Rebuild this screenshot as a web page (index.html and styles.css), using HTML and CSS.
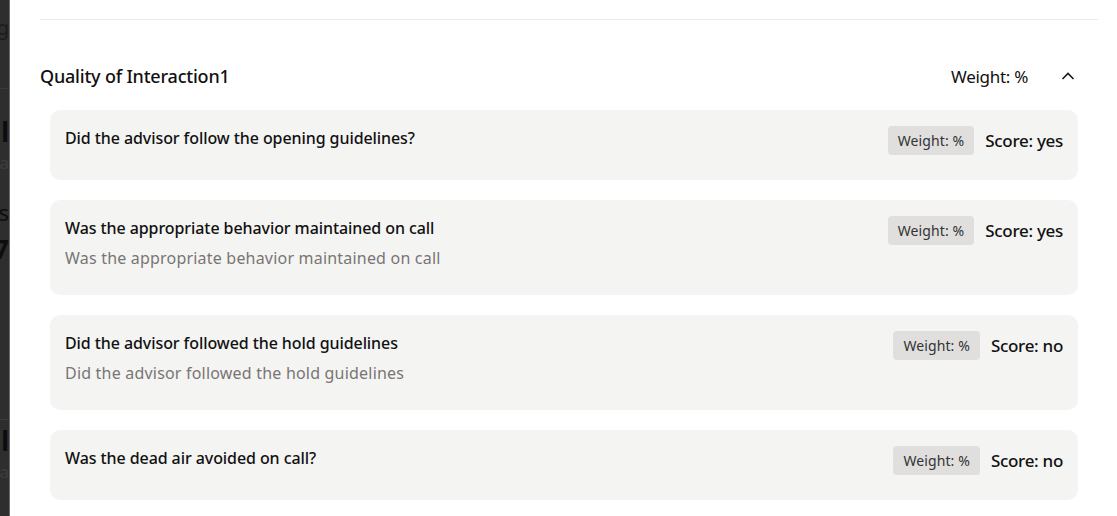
FILE: index.html
```html
<!DOCTYPE html>
<html lang="en">
<head>
<meta charset="utf-8">
<title>Quality of Interaction</title>
<link rel="stylesheet" href="styles.css">
</head>
<body>
<div class="app">
  <aside class="backdrop">
    <div class="bg-line bg-t1"><span>Loading</span></div>
    <div class="bg-rule"></div>
    <div class="bg-line bg-b1"><span>Total</span></div>
    <div class="bg-line bg-s1"><span>Data</span></div>
    <div class="bg-line bg-s2"><span>Items</span></div>
    <div class="bg-line bg-b2"><span>87</span></div>
    <div class="bg-rule bg-rule2"></div>
    <div class="bg-line bg-b3"><span>Total</span></div>
    <div class="bg-line bg-s3"><span>Data</span></div>
  </aside>
  <main class="drawer">
    <div class="top-rule"></div>
    <section class="section">
      <header class="section-head">
        <h2 class="section-title">Quality of Interaction1</h2>
        <div class="section-meta">
          <span class="section-weight">Weight: %</span>
          <button class="toggle" aria-label="Collapse">
            <svg width="14" height="10" viewBox="0 0 14 10"><path d="M1.5 8 L7 2.5 L12.5 8" fill="none" stroke="#1a1a1a" stroke-width="1.6"/></svg>
          </button>
        </div>
      </header>
      <div class="cards">
        <div class="card">
          <div class="card-text">
            <div class="q-title">Did the advisor follow the opening guidelines?</div>
          </div>
          <div class="card-meta"><span class="badge">Weight: %</span><span class="score">Score: yes</span></div>
        </div>
        <div class="card">
          <div class="card-text">
            <div class="q-title">Was the appropriate behavior maintained on call</div>
            <div class="q-sub">Was the appropriate behavior maintained on call</div>
          </div>
          <div class="card-meta"><span class="badge">Weight: %</span><span class="score">Score: yes</span></div>
        </div>
        <div class="card">
          <div class="card-text">
            <div class="q-title">Did the advisor followed the hold guidelines</div>
            <div class="q-sub">Did the advisor followed the hold guidelines</div>
          </div>
          <div class="card-meta"><span class="badge">Weight: %</span><span class="score">Score: no</span></div>
        </div>
        <div class="card">
          <div class="card-text">
            <div class="q-title">Was the dead air avoided on call?</div>
          </div>
          <div class="card-meta"><span class="badge">Weight: %</span><span class="score">Score: no</span></div>
        </div>
      </div>
    </section>
  </main>
</div>
</body>
</html>
```

FILE: styles.css
```css
* { box-sizing: border-box; }
html, body { margin: 0; padding: 0; }
body {
  font-family: "Noto Sans", "Open Sans", Arial, sans-serif;
  color: #111;
  background: #fff;
  width: 1117px;
  height: 516px;
  overflow: hidden;
}
.app {
  display: flex;
  height: 516px;
}
.backdrop {
  width: 10px;
  flex: 0 0 10px;
  background: #2e2e2e;
  border-right: 1px solid #6a6a6a;
  overflow: hidden;
  display: flex;
  flex-direction: column;
}
.bg-line {
  display: flex;
  justify-content: flex-end;
  white-space: nowrap;
  color: #141414;
  overflow: hidden;
}
.bg-t1 { margin-top: 12px; font-size: 20px; line-height: 32px; height: 32px; color: #1b1b1b; }
.bg-rule { margin-top: 44px; height: 1px; flex: 0 0 1px; background: #3a3a3a; }
.bg-b1 { margin-top: 24px; font-size: 26px; font-weight: 700; line-height: 38px; height: 38px; color: #0d0d0d; }
.bg-s1 { font-size: 17px; line-height: 24px; height: 24px; color: #3d3d3d; }
.bg-s2 { margin-top: 22px; font-size: 22px; line-height: 30px; height: 30px; color: #0d0d0d; }
.bg-b2 { margin-top: 6px; font-size: 26px; font-weight: 700; line-height: 32px; height: 32px; color: #0d0d0d; }
.bg-rule2 { margin-top: 154px; }
.bg-b3 { margin-top: 2px; font-size: 26px; font-weight: 700; line-height: 38px; height: 38px; color: #0d0d0d; }
.bg-s3 { font-size: 17px; line-height: 24px; height: 24px; color: #3d3d3d; }

.drawer {
  flex: 1;
  padding: 0 19px 0 30px;
}
.top-rule {
  height: 20px;
  border-bottom: 1px solid #ebebeb;
}
.section-head {
  display: flex;
  align-items: center;
  justify-content: space-between;
  height: 38px;
  margin-top: 37px;
  margin-bottom: 15px;
  padding-right: 20px;
}
.section-title {
  margin: 0;
  font-size: 18px;
  font-weight: 500;
  letter-spacing: -0.2px;
}
.section-meta {
  display: flex;
  align-items: center;
  gap: 30px;
}
.section-weight {
  font-size: 17px;
  letter-spacing: -0.3px;
}
.toggle {
  width: 20px;
  height: 20px;
  padding: 0;
  border: 0;
  background: none;
  display: flex;
  align-items: center;
  justify-content: center;
}
.cards {
  display: flex;
  flex-direction: column;
  gap: 20px;
  margin: 0 20px 0 10px;
}
.card {
  background: #f4f4f3;
  border-radius: 10px;
  padding: 16px 15px 25px 15px;
  display: flex;
  justify-content: space-between;
  align-items: flex-start;
}
.card-text {
  display: flex;
  flex-direction: column;
  gap: 6px;
}
.q-title {
  font-size: 16px;
  font-weight: 500;
  line-height: 24px;
  letter-spacing: -0.08px;
}
.q-sub {
  font-size: 16px;
  line-height: 24px;
  color: #7a7574;
  letter-spacing: 0.2px;
}
.card-meta {
  display: flex;
  align-items: center;
  gap: 11px;
}
.badge {
  background: #e0dfde;
  border-radius: 4px;
  height: 29px;
  line-height: 29px;
  padding: 0 10px;
  font-size: 14px;
  letter-spacing: 0.1px;
  color: #333;
}
.score {
  font-size: 17px;
  font-weight: 500;
  letter-spacing: -0.3px;
}
```
